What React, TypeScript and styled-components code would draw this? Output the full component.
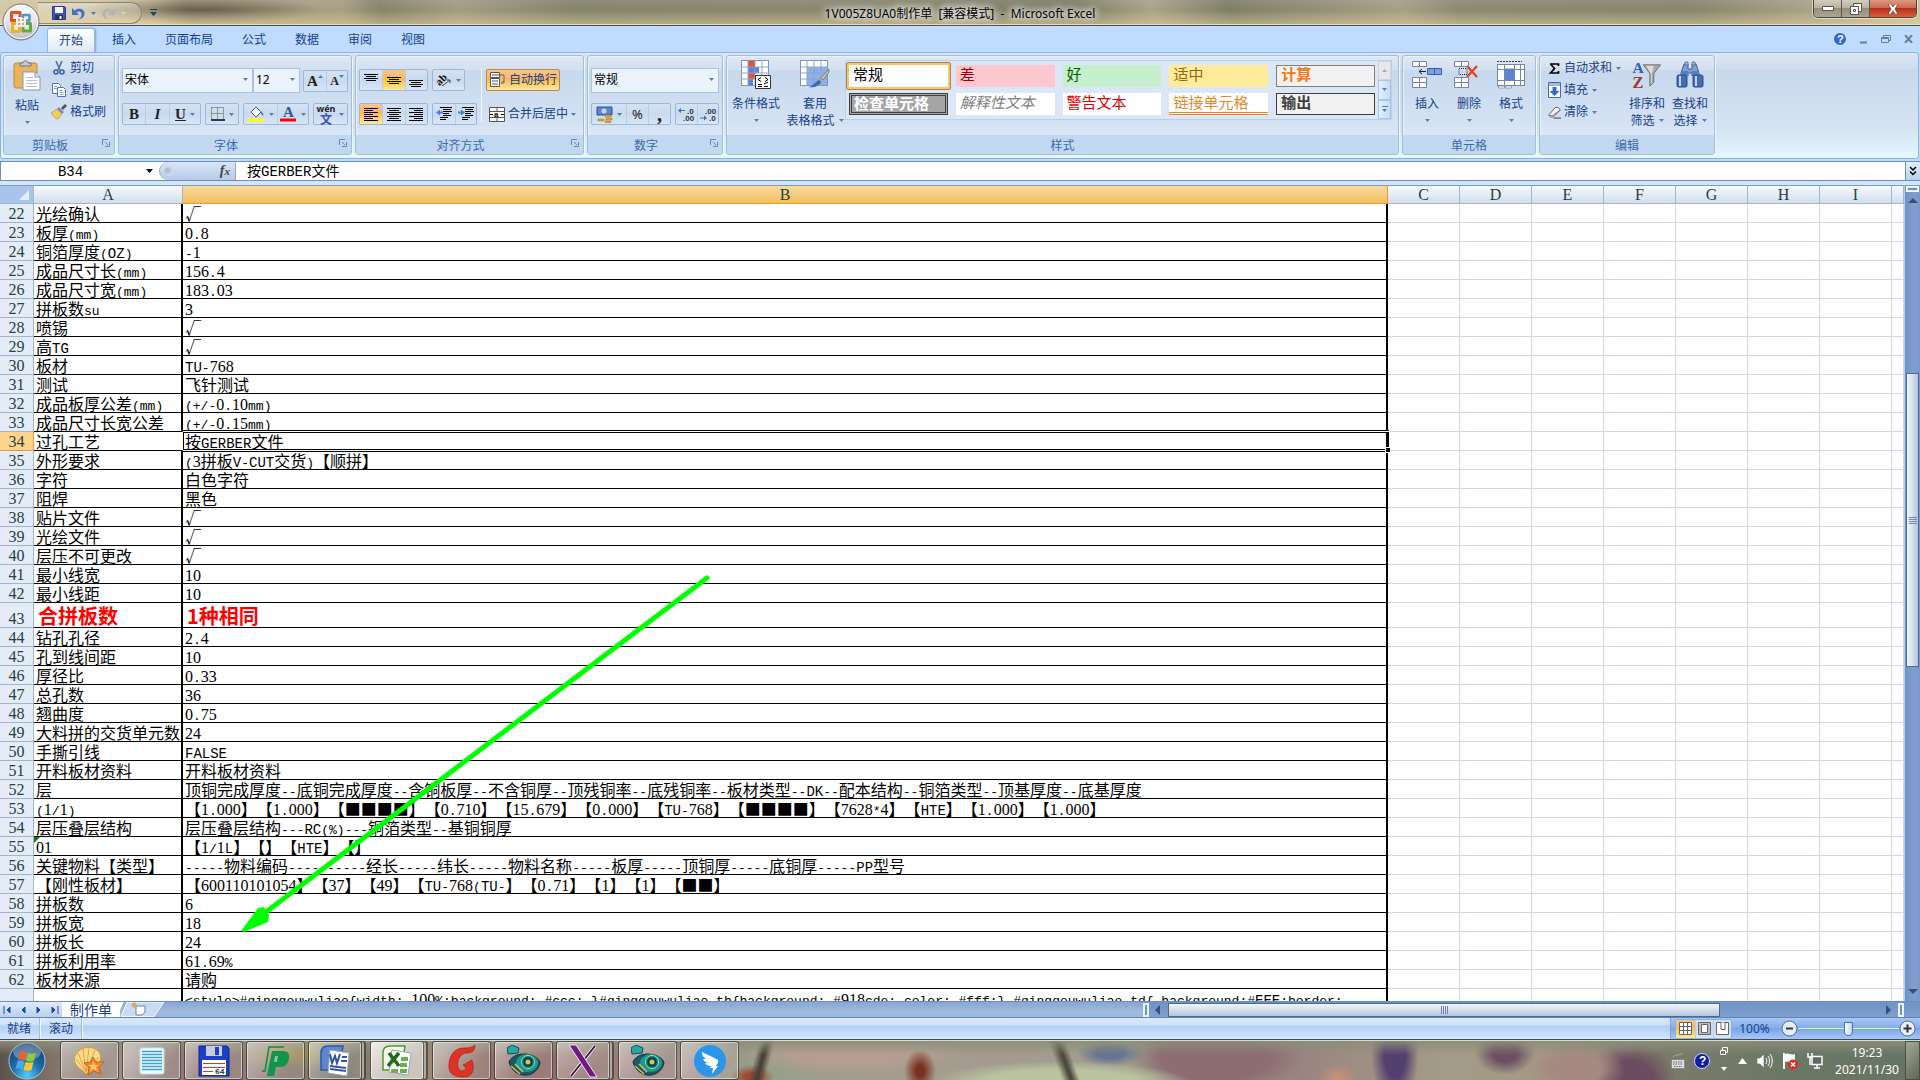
import React from "react";
import styled, { createGlobalStyle, css } from "styled-components";

const UI = `"Noto Sans", "Noto Sans CJK SC", sans-serif`;
const SONG = `"Liberation Mono", "Noto Sans CJK SC", monospace`;

const Global = createGlobalStyle`
  *, *::before, *::after { box-sizing: border-box; }
  html, body { margin: 0; height: 100%; overflow: hidden; }
  body { font: 12px/16px ${UI}; color: #15428b; }
  button, input, select { font: inherit; color: inherit; margin: 0; padding: 0; border: 0; background: none; border-radius: 0; outline: 0; }
  svg { display: block; flex: none; }
`;

/* ---------- shell ---------- */
const Page = styled.div`
  display: flex;
  flex-direction: column;
  height: 100vh;
  position: relative;
  background: #bfdbff;
`;

const TitleBar = styled.header`
  display: grid;
  grid-template-columns: 1fr auto 1fr;
  align-items: start;
  height: 26px;
  flex: none;
  border-bottom: 1px solid #4d4f45;
  box-shadow: inset 0 -1px 0 #e6dfc0;
  background:
    linear-gradient(180deg, rgba(255, 255, 255, 0.08), rgba(255, 255, 255, 0) 40%, rgba(235, 215, 160, 0.5)),
    radial-gradient(ellipse 120px 14px at 200px 10px, rgba(70, 60, 45, 0.65), transparent 100%),
    linear-gradient(75deg, #d3c7a6 0, #cbbf9c 8%, #a39a80 10%, #a79f83 18%, #85836a 20%, #a29c84 24%, #84836c 30%, #8a8770 42%, #7d7d66 56%, #aaa389 60%, #7e7e68 64%, #a69f86 73%, #8b8972 76%, #86856d 88%, #a8a187 94%, #c9bf9f 100%);
`;

const QuickBar = styled.div`
  display: flex;
  align-items: center;
  padding-left: 38px;
`;
const QuickPill = styled.div`
  display: flex;
  align-items: center;
  gap: 6px;
  height: 22px;
  margin-top: 2px;
  width: 104px;
  padding-left: 14px;
  border: 1px solid #8b8877;
  border-left: 0;
  border-radius: 0 11px 11px 0;
  background: linear-gradient(180deg, rgba(255, 255, 255, 0.3), rgba(255, 255, 255, 0.08));
`;
const IconButton = styled.button`
  display: flex;
  align-items: center;
  justify-content: center;
  padding: 0;
`;
const QuickMore = styled(IconButton)`
  margin-left: 7px;
  width: 8px;
`;
const OfficeButton = styled.button`
  position: absolute;
  left: 2px;
  top: 3px;
  width: 38px;
  height: 38px;
  z-index: 3;
`;
const Title = styled.h1`
  margin: 0;
  padding: 0 8px;
  font: 400 12px/28px ${UI};
  color: #000;
  white-space: pre;
  text-shadow: 0 0 6px #fff, 0 0 8px #fff, 0 0 10px rgba(255, 255, 255, 0.8);
`;
const WindowButtons = styled.div`
  justify-self: end;
  display: flex;
  width: 104px;
  height: 18px;
  margin-right: 3px;
  border: 1px solid #4b463c;
  border-top: 0;
  border-radius: 0 0 5px 5px;
  overflow: hidden;
  box-shadow: 0 0 0 1px rgba(255, 255, 255, 0.5);
`;
const WindowButton = styled.button<{ $close?: boolean }>`
  display: flex;
  align-items: center;
  justify-content: center;
  flex: ${(p) => (p.$close ? "0 0 47px" : "1")};
  border-left: ${(p) => (p.$close ? "1px solid #5a2a20" : "0")};
  background: ${(p) =>
    p.$close
      ? "linear-gradient(180deg, #dc9a87 0, #cc6a50 45%, #b8301c 50%, #d8603c 100%)"
      : "linear-gradient(180deg, #d3cdbd 0, #b9b29e 45%, #958e7b 50%, #aca592 100%)"};
  & + & { border-left: 1px solid #5b564a; }
`;

const TabRow = styled.nav`
  display: flex;
  align-items: flex-end;
  gap: 5px;
  height: 26px;
  flex: none;
  padding-left: 47px;
  background: #bfdbff;
`;
const Tab = styled.button<{ $active?: boolean }>`
  height: 24px;
  padding: 0 12px;
  line-height: 22px;
  color: #15428b;
  ${(p) =>
    p.$active &&
    css`
      background: linear-gradient(180deg, #fff, #f3f8fe 40%, #dde8f5);
      border: 1px solid #93b8e6;
      border-bottom: 0;
      border-radius: 3px 3px 0 0;
      padding: 0 11px;
      box-shadow: inset 0 1px 0 #fff, 1px 0 2px #7fa7d8;
    `}
`;
const TabRight = styled.div`
  display: flex;
  align-items: center;
  gap: 13px;
  margin-left: auto;
  height: 26px;
  padding-right: 6px;
`;

const Ribbon = styled.section`
  display: flex;
  gap: 3px;
  flex: none;
  height: 107px;
  margin-right: 1px;
  padding: 2px 3px 3px 2px;
  border: 1px solid #8db2e3;
  border-radius: 3px;
  background: linear-gradient(180deg, #dbe6f4 0, #cfdcec 16px, #c8d8ec 17px, #d5e3f1 75px, #dbf0fa 95px, #e3f8ff 103px);
`;
const GroupBox = styled.section<{ $w: number }>`
  display: flex;
  flex-direction: column;
  width: ${(p) => p.$w}px;
  border: 1px solid #9fbfdd;
  border-radius: 3px;
  box-shadow: 1px 1px 0 #eef6fd, inset 1px 1px 0 #e8f0f9;
  background: linear-gradient(180deg, #dee8f5 0, #d3dff0 14px, #c8d8ed 15px, #d5e3f3 70px, #dae8f6 80px);
`;
const GroupBody = styled.div<{ $pad?: string; $gap?: number }>`
  display: flex;
  align-items: flex-start;
  flex: 1;
  min-height: 0;
  padding: ${(p) => p.$pad || "0 3px"};
  gap: ${(p) => p.$gap || 0}px;
`;
const GroupLabel = styled.footer`
  display: flex;
  align-items: center;
  gap: 6px;
  height: 19px;
  background: #c1d8f0;
  color: #3e6aaa;
  border-radius: 0 0 2px 2px;
  & > span { flex: 1; padding-top: 2px; text-align: center; }
  & > svg { margin: 0 4px 3px 0; }
`;

const Stack = styled.div<{ $gap?: number; $pad?: string }>`
  display: flex;
  flex-direction: column;
  gap: ${(p) => p.$gap || 0}px;
  padding: ${(p) => p.$pad || 0};
`;
const Line = styled.div<{ $gap?: number }>`
  display: flex;
  align-items: center;
  gap: ${(p) => (p.$gap === undefined ? 4 : p.$gap)}px;
`;
const BigButton = styled.button<{ $w: number }>`
  display: flex;
  flex-direction: column;
  align-items: center;
  width: ${(p) => p.$w}px;
  padding-top: 4px;
  line-height: 17px;
  white-space: nowrap;
  & > svg:first-child { margin-bottom: 6px; }
`;
const CaretGap = styled.span`
  display: flex;
  align-items: center;
  height: 17px;
`;
const TextCaret = styled.span`
  display: flex;
  align-items: center;
  gap: 4px;
`;
const SmallButton = styled.button`
  display: flex;
  align-items: center;
  gap: 3px;
  height: 22px;
  white-space: nowrap;
`;
const Segment = styled.div`
  display: flex;
  height: 22px;
  border: 1px solid #9ab8dc;
  border-radius: 2px;
  background: linear-gradient(180deg, #d5e2f2, #c9daee 50%, #d8e6f6);
`;
const hot = css`
  background: linear-gradient(180deg, #f8c58a 0, #fbb75c 45%, #fdc95c 60%, #ffe79a 100%);
`;
const SegButton = styled.button<{ $w: number; $on?: boolean }>`
  display: flex;
  align-items: center;
  justify-content: center;
  gap: 4px;
  width: ${(p) => p.$w}px;
  color: #222;
  & + & { border-left: 1px solid #b8cde6; }
  ${(p) => p.$on && hot}
`;
const Raised = styled.span`
  align-self: flex-start;
  padding-top: 4px;
  margin-left: -4px;
`;
const WrapButton = styled(SmallButton)`
  width: 74px;
  padding-left: 2px;
  border: 1px solid #b58a4f;
  border-radius: 2px;
  ${hot}
`;
const MergeButton = styled(SmallButton)`
  padding-left: 3px;
`;
const VRule = styled.i`
  width: 1px;
  height: 54px;
  margin-top: 12px;
  background: #f0f6fc;
`;
const Combo = styled.label<{ $w: number }>`
  display: flex;
  align-items: center;
  width: ${(p) => p.$w}px;
  height: 25px;
  padding: 0 4px 2px 2px;
  border: 1px solid #abc1de;
  background: #eaf2fb;
  color: #000;
  & select { appearance: none; flex: 1; min-width: 0; height: 21px; color: #000; }
`;

const Gallery = styled.div`
  display: flex;
  width: 547px;
  height: 60px;
  margin-top: 4px;
  border: 1px solid #b9d0ed;
  background: #dbe7f6;
`;
const GalleryGrid = styled.div`
  display: grid;
  grid-template-columns: repeat(5, 1fr);
  grid-auto-rows: 28px;
  column-gap: 2px;
  flex: 1;
  padding-top: 1px;
`;
const StyleFrame = styled.button<{ $sel?: boolean }>`
  display: flex;
  padding: 2px;
  border: 1px solid ${(p) => (p.$sel ? "#a8835a" : "transparent")};
  border-radius: 2px;
  background: ${(p) => (p.$sel ? "#f9c75d" : "none")};
`;
const StyleCell = styled.span<{ $k: string }>`
  flex: 1;
  height: 22px;
  padding-left: 4px;
  text-align: left;
  font: 15px/18px "Noto Sans CJK SC", sans-serif;
  color: #000;
  background: #fff;
  ${(p) =>
    ({
      bad: css`background: #ffc7ce; color: #9c0006;`,
      good: css`background: #c6efce; color: #006100;`,
      mid: css`background: #ffeb9c; color: #9c6500;`,
      calc: css`background: #f2f2f2; color: #e87d1c; font-weight: 700; border: 1px solid #7f7f7f; line-height: 16px;`,
      check: css`background: #a5a5a5; color: #fff; font-weight: 700; border: 3px double #3f3f3f; line-height: 14px; padding-left: 2px;`,
      note: css`color: #7f7f7f; font-style: italic;`,
      warn: css`color: #d00;`,
      link: css`color: #e08a2a; border-bottom: 3px double #ee8322;`,
      out: css`background: #f2f2f2; color: #3f3f3f; font-weight: 700; border: 1px solid #3f3f3f; line-height: 16px;`,
      normal: css``,
    })[p.$k]}
`;
const GalleryScroll = styled.div`
  display: flex;
  flex-direction: column;
  width: 13px;
  & button {
    flex: 1;
    display: flex;
    flex-direction: column;
    gap: 2px;
    align-items: center;
    justify-content: center;
    border: 1px solid #a9c5e8;
    background: linear-gradient(90deg, #e3eefb, #c7dbf3);
  }
  & button:first-child { background: #e8e8e8; border-color: #cdd5de; }
`;
const TinyRule = styled.i`
  width: 6px;
  height: 1px;
  background: #5b7cb0;
`;

/* ---------- formula bar ---------- */
const FormulaBar = styled.div`
  display: flex;
  flex: none;
  height: 20px;
  margin-top: 2px;
  border-top: 1px solid #6c8fc0;
  border-bottom: 1px solid #6c8fc0;
  background: #fff;
  color: #000;
`;
const NameBox = styled.label`
  display: flex;
  align-items: center;
  width: 159px;
  padding-right: 6px;
  border-left: 1px solid #6c8fc0;
  & input { flex: 1; min-width: 0; padding: 2px 6px 0 0; text-align: center; font: 14px/16px ${SONG}; }
`;
const FxPill = styled.div`
  display: flex;
  align-items: center;
  justify-content: space-between;
  width: 77px;
  padding: 0 5px 0 4px;
  border: 1px solid #8fadd3;
  border-width: 0 1px 0 1px;
  border-radius: 10px 0 0 10px;
  background: linear-gradient(180deg, #dbe7f6, #b3c9e8);
`;
const Knob = styled.i`
  width: 9px;
  height: 9px;
  border-radius: 50%;
  background: radial-gradient(circle at 35% 35%, #a6b6cc, #e4ecf6);
`;
const Fx = styled.span`
  font: italic 700 14px/16px "Liberation Serif", serif;
  color: #444;
  & small { font-size: 11px; }
`;
const FormulaInput = styled.input`
  flex: 1;
  min-width: 0;
  padding: 2px 0 0 11px !important;
  font: 14px/16px ${SONG} !important;
`;
const Expand = styled(IconButton)`
  width: 15px;
  background: linear-gradient(180deg, #e6f0fb, #b9d1ee);
  border-left: 1px solid #6c8fc0;
`;
const Gap = styled.div`
  height: 4px;
  flex: none;
  background: #d5e5f8;
`;

/* ---------- sheet ---------- */
const Work = styled.main`
  display: flex;
  flex: 1;
  min-height: 0;
`;
const Sheet = styled.div`
  position: relative;
  flex: 1;
  min-width: 0;
  overflow: hidden;
  background: #fff;
`;
const Grid = styled.table`
  width: 100%;
  table-layout: fixed;
  border-collapse: separate;
  border-spacing: 0;
  color: #000;
  font: 16px/18px "Noto Sans CJK SC", sans-serif;
  text-spacing-trim: space-all;
  & th, & td { padding: 0; font-weight: 400; }
`;
const ColHead = styled.th<{ $on?: boolean; $corner?: boolean }>`
  height: 19px;
  font: 400 16px/17px "Liberation Serif", serif;
  color: #27413e;
  border-top: 1px solid #7a9cc4;
  border-bottom: 1px solid #9eb6ce;
  border-right: 1px solid #9eb6ce;
  background: linear-gradient(180deg, #f6fafb, #e4ecf5 50%, #d5dcea);
  ${(p) => p.$on && css`background: linear-gradient(180deg, #f9d99f, #f1c15f); border-color: #f29536; border-top-color: #7a9cc4;`}
  ${(p) => p.$corner && css`background: #a9c4e9;`}
  & svg { margin-left: auto; margin-right: 4px; }
`;
const RowHead = styled.th<{ $on?: boolean }>`
  height: 19px;
  vertical-align: bottom;
  font: 400 16px/16px "Liberation Serif", serif;
  color: #27413e;
  border-right: 1px solid #9eb6ce;
  border-bottom: 1px solid #9eb6ce;
  background: #e4ecf7;
  ${(p) => p.$on && css`background: #ffd58d; border-color: #f29536;`}
`;
const Cell = styled.td`
  position: relative;
  border-bottom: 1px solid #000;
  border-right: 2px solid #000;
  vertical-align: middle;
`;
const Blank = styled.td`
  border-right: 1px solid #d0d7e5;
  border-bottom: 1px solid #d0d7e5;
`;
const CellText = styled.div<{ $big?: boolean }>`
  height: ${(p) => (p.$big ? 24 : 18)}px;
  overflow: hidden;
  white-space: pre;
  padding-left: 2px;
  ${(p) => p.$big && css`padding-left: 4px; font-size: 20px; line-height: 26px; font-weight: 700; color: #f00;`}
`;
const Digits = styled.span`
  font-family: "Liberation Serif", serif;
`;
const Capitals = styled.span`
  font-family: "Liberation Mono", monospace;
  font-size: 14px;
`;
const Marks = styled(Capitals)`
  font-size: 13px;
`;
const Selection = styled.div`
  position: absolute;
  inset: 0 -3px 0 0;
  border: 1px solid #000;
  box-shadow: 0 -1px 0 #fff, 0 1px 0 #fff, 0 -2px 0 #000, 0 2px 0 #000, -2px 0 0 #fff;
  z-index: 1;
  &::after {
    content: "";
    position: absolute;
    right: -2px;
    bottom: -3px;
    width: 4px;
    height: 4px;
    background: #000;
    box-shadow: 0 0 0 1px #fff;
  }
`;
const ErrorMark = styled.i`
  position: absolute;
  left: 0;
  top: 0;
  border: 3px solid transparent;
  border-top-color: #0a7a1a;
  border-left-color: #0a7a1a;
`;
const Arrow = styled.svg`
  position: absolute;
  left: 0;
  top: 0;
  pointer-events: none;
  z-index: 2;
`;

const VScroll = styled.div`
  display: flex;
  flex-direction: column;
  align-items: stretch;
  width: 16px;
  flex: none;
  padding: 1px;
  border-left: 1px solid #b7cdea;
  background: linear-gradient(90deg, #6f93c4, #7f9fce 60%, #7899c9);
`;
const SplitV = styled.i`
  height: 6px;
  border: 1px solid #fff;
  background: #6f93c4;
  box-shadow: inset 0 0 0 1px #dce9f8;
`;
const VThumb = styled.div`
  display: flex;
  align-items: center;
  justify-content: center;
  height: 294px;
  border: 1px solid #4c6a98;
  background: linear-gradient(90deg, #f2f5fa, #d5dfed 50%, #b2c5de);
`;
const Spacer = styled.div<{ $h?: number; $w?: number }>`
  ${(p) => (p.$h ? `flex: 0 0 ${p.$h}px;` : p.$w ? `flex: 0 0 ${p.$w}px;` : "flex: 1;")}
`;

/* ---------- sheet tabs & status ---------- */
const SheetBar = styled.div`
  display: flex;
  flex: none;
  height: 17px;
  border-top: 1px solid #6c8fc0;
  border-bottom: 1px solid #5f84b8;
  background: linear-gradient(180deg, #86a6d2, #9db9de 60%);
`;
const SheetNav = styled.div`
  display: flex;
  width: 62px;
  background: linear-gradient(180deg, #dfeafa, #b8d0ef);
  & button { flex: 1; display: flex; align-items: center; justify-content: center; }
`;
const SheetTab = styled.button`
  width: 58px;
  text-align: center;
  background: #fff;
  font: 14px/15px "Noto Sans CJK SC", sans-serif;
  color: #1d3f7a;
`;
const HScroll = styled.div`
  display: flex;
  align-items: center;
  flex: 0 1 777px;
  margin-left: auto;
  background: linear-gradient(180deg, #6f93c4, #7f9fce);
`;
const SplitH = styled.i`
  width: 6px;
  height: 14px;
  border: 2px solid #eef5fd;
  background: #6f93c4;
`;
const HThumb = styled.div`
  display: flex;
  align-items: center;
  justify-content: center;
  flex: 0 1 552px;
  height: 14px;
  border: 1px solid #4c6a98;
  background: linear-gradient(180deg, #f2f5fa, #d5dfed 50%, #b2c5de);
`;
const StatusBar = styled.footer`
  display: flex;
  flex: none;
  height: 22px;
  background: linear-gradient(180deg, #dbe9fb 0, #cfe1fa 30%, #b5d0f5 40%, #c9defa 80%, #d6e7fd 100%);
  border-bottom: 1px solid #3a4a5f;
`;
const StatusItem = styled.span`
  padding: 0 8px 0 7px;
  line-height: 21px;
  border-right: 1px solid #9dbde8;
  box-shadow: 1px 0 0 #eef5fe;
  & + & { padding-left: 9px; }
`;
const StatusRight = styled.div`
  display: flex;
  align-items: center;
  margin-left: auto;
  width: 250px;
  padding: 0 4px 0 4px;
  border-left: 1px solid #7da2d4;
  background: linear-gradient(180deg, #a9c8f4 0, #85aeea 45%, #7aa6e6 50%, #a5c7f6 100%);
`;
const ViewSeg = styled(Segment)`
  width: 57px;
  height: 20px;
  border-color: #8fb0dc;
`;
const ZoomText = styled.button`
  width: 45px;
  padding-right: 8px !important;
  text-align: center;
`;
const ZoomRange = styled.input`
  appearance: none;
  flex: 1;
  min-width: 0;
  height: 16px;
  background: linear-gradient(#dfeaf9, #dfeaf9) center / 100% 1px no-repeat !important;
  &::-webkit-slider-thumb {
    appearance: none;
    width: 9px;
    height: 14px;
    border: 1px solid #4f6f9f;
    border-radius: 1px 1px 5px 5px;
    background: linear-gradient(90deg, #fff, #c2d3ea);
  }
`;

/* ---------- taskbar ---------- */
const TaskBar = styled.footer`
  display: flex;
  flex: none;
  height: 40px;
  padding-left: 8px;
  border-top: 1px solid #dcdac9;
  background:
    linear-gradient(180deg, rgba(138, 142, 122, 0.9) 0, rgba(138, 142, 122, 0) 14px),
    linear-gradient(105deg, transparent 733px, #4c4038 740px, #4c4038 742px, transparent 749px),
    radial-gradient(ellipse 22px 12px at 752px 36px, #9a4a30 0 30%, transparent),
    radial-gradient(ellipse 16px 22px at 920px 30px, #7a3220 0 25%, transparent),
    linear-gradient(70deg, transparent 998px, #4f4a40 1006px, #4f4a40 1008px, transparent 1015px),
    radial-gradient(ellipse 130px 22px at 1060px 42px, #b9c3a0 0 60%, transparent),
    radial-gradient(ellipse 24px 60px at 1395px 10px, #54406e 0 45%, transparent),
    radial-gradient(ellipse 20px 16px at 1338px 38px, #cf9272, transparent),
    radial-gradient(ellipse 30px 22px at 1505px 12px, #6b5064 0 40%, transparent),
    radial-gradient(ellipse 50px 28px at 1575px 28px, #a68a82 0 50%, transparent),
    radial-gradient(ellipse 46px 40px at 1630px 40px, #6b4c60 0 50%, transparent),
    radial-gradient(ellipse 110px 26px at 850px 8px, #b49e92 0 60%, transparent),
    radial-gradient(ellipse 34px 14px at 1110px 12px, #667590 0 40%, transparent),
    radial-gradient(ellipse 90px 40px at 1215px 16px, #8d6c72 0 60%, transparent),
    radial-gradient(ellipse 60px 22px at 290px 8px, #9a8a52 0 30%, transparent),
    linear-gradient(90deg, #5c544c 0, #86766c 60px, #a08f88 130px, #8c6f70 200px, #8f7c78 260px, #7a7466 340px, #9a8d7c 420px, #8b6260 520px, #967a74 600px, #a08c86 700px, #96a089 760px, #a69c8e 900px, #a59a90 1000px, #a0a28c 1160px, #9a8480 1300px, #a39b88 1440px, #a49a84 1550px, #7c7a6a 1660px, #6c7866 1780px, #667463 100%);
`;
const StartButton = styled(IconButton)`
  width: 38px;
  margin-right: 14px;
`;
const TaskButton = styled.button<{ $active?: boolean; $stack?: boolean }>`
  display: flex;
  align-items: center;
  justify-content: center;
  width: ${(p) => (p.$stack ? 54 : 59)}px;
  margin-right: ${(p) => (p.$stack ? 8 : 3)}px;
  height: 39px;
  border: 1px solid rgba(50, 45, 40, 0.75);
  border-radius: 3px;
  box-shadow: inset 0 0 0 1px rgba(255, 255, 255, 0.5)${(p) => (p.$stack ? ", 3px 0 0 -1px rgba(235,230,220,.6), 4px 0 0 0 rgba(50,45,40,.6)" : "")};
  background: linear-gradient(135deg, rgba(255, 255, 255, ${(p) => (p.$active ? 0.85 : 0.5)}), rgba(255, 255, 255, ${(p) => (p.$active ? 0.5 : 0.12)}) 70%);
`;
const Tray = styled.div`
  display: flex;
  align-items: center;
  margin-left: auto;
  gap: 9px;
`;
const Clock = styled.time`
  width: 74px;
  text-align: center;
  color: #fff;
  line-height: 17px;
  margin: 0 0 0 -2px;
`;
const ShowDesktop = styled.button`
  align-self: stretch;
  width: 15px;
  margin-left: -8px;
  border: 1px solid #4b4f44 !important;
  background: linear-gradient(135deg, #a3a796, #5f6757) !important;
`;

/* ---------- small drawings ---------- */
const Caret = ({ c = "#5b7cb0", up = false }: { c?: string; up?: boolean }) => (
  <svg width="5" height="3" viewBox="0 0 5 3"><path d={up ? "M0 3h5L2.500 0z" : "M0 0h5L2.500 3z"} fill={c} /></svg>
);
const Launcher = () => (
  <svg width="8" height="8" viewBox="0 0 8 8" fill="none" stroke="#6b88b5"><path d="M.5 6V.5H6M3 3l3 3M7.500 3v4.500H3" /></svg>
);
const Bars = ({ rows, widths, y = 0 }: { rows: number; widths: [number, number][]; y?: number }) => (
  <svg width="15" height="15" viewBox="0 0 15 15" stroke="#000" strokeWidth="1">
    {Array.from({ length: rows }, (_, i) => {
      const [a, b] = widths[i % widths.length];
      return <path key={i} d={`M${a} ${y + i * 2 + 0.5}H${b}`} />;
    })}
  </svg>
);
const Indent = ({ out = false }: { out?: boolean }) => (
  <svg width="17" height="14" viewBox="0 0 17 14">
    <path d="M4 .5h12M8 2.500h7M8 4.500h8M8 6.500h5M8 8.500h7M4 10.500h8M4 12.500h6" stroke="#000" />
    <path d="M7.500 0v14" stroke="#000" strokeDasharray="1 1" />
    <path d={out ? "M0 5.500l4-3v2h3v2H4v2z" : "M7 5.500l-4-3v2H0v2h3v2z"} fill="#4a7fd0" />
  </svg>
);
const Office = () => (
  <svg width="38" height="38" viewBox="0 0 38 38">
    <defs>
      <radialGradient id="ob" cx=".5" cy=".25" r=".8"><stop offset="0" stopColor="#fff" /><stop offset=".55" stopColor="#e4e6ea" /><stop offset="1" stopColor="#a9adb5" /></radialGradient>
    </defs>
    <circle cx="19" cy="19" r="18" fill="url(#ob)" stroke="#77797c" />
    <circle cx="19" cy="19" r="16.500" fill="none" stroke="#fff" />
    <g fill="none" strokeWidth="3" strokeLinejoin="round">
      <path d="M14 17.500H9.500V9.500h8.500V14" stroke="#e2541b" />
      <path d="M21 15v-3h6.500v5.500H24" stroke="#4d95d8" strokeWidth="2.500" />
      <path d="M14 20.500h-3.500v8h7V24" stroke="#f3b21c" />
      <path d="M24 20.500h4.500V28H21v-4" stroke="#65a83a" />
    </g>
    <path d="M16 17h2M20 17h2M16 21h2M20 21h2" stroke="#e08040" strokeWidth="1.500" />
  </svg>
);
const Save = () => (
  <svg width="14" height="14" viewBox="0 0 14 14"><path d="M.5.500h12l1 1v12H.5z" fill="#4453b8" stroke="#2c3788" /><path d="M3 1h8v6H3z" fill="#f4f6fc" /><path d="M3 9h8v5H3z" fill="#23307c" /><path d="M7.500 10h2v3h-2z" fill="#fff" /></svg>
);
const Undo = ({ c = "#3f72cc" }: { c?: string }) => (
  <svg width="13" height="13" viewBox="0 0 13 13"><path d="M0 1v7h7L4.600 5.600C7 3.500 10 5 9.500 8c-.2 2-1.500 3.500-3.500 4.500 4-.3 7-3 6.500-7C12 1.500 6 .5 2.500 3.500z" fill={c} /></svg>
);
const Paste = () => (
  <svg width="28" height="31" viewBox="0 0 28 31">
    <rect x="1" y="3" width="23" height="25" rx="2" fill="#e9b45c" stroke="#b98b3e" />
    <path d="M7 6V3h3c0-3 5-3 5 0h3v3z" fill="#c8ccd2" stroke="#6f757e" />
    <path d="M10 12h12l5 5v13H10z" fill="#fff" stroke="#8b98ad" />
    <path d="M22 12v5h5" fill="#dce4ef" stroke="#8b98ad" />
    <path d="M13 17.500h7M13 20.500h11M13 23.500h11M13 26.500h11" stroke="#b5c2d4" />
  </svg>
);
const Cut = () => (
  <svg width="16" height="16" viewBox="0 0 16 16" fill="none"><path d="M5 1l4 9M11 1L7 10" stroke="#56719f" strokeWidth="1.600" /><circle cx="5" cy="12" r="2" stroke="#3361b0" strokeWidth="1.600" /><circle cx="11" cy="12" r="2" stroke="#3361b0" strokeWidth="1.600" /></svg>
);
const Copy = () => (
  <svg width="16" height="16" viewBox="0 0 16 16" fill="#fff" stroke="#4e74b4"><path d="M1.500 1.500h6l2 2v8h-8z" /><path d="M6.500 5.500h6l2 2v7h-8z" /><path d="M3 4.500h3M3 6.500h3M8.500 8.500h3M8.500 10.500h4M8.500 12.500h4" stroke="#7d9fd6" /></svg>
);
const Brush = () => (
  <svg width="16" height="16" viewBox="0 0 16 16"><path d="M0 9l6-4 5 5-4 5c-2 0-5-3-7-6z" fill="#f0cd62" stroke="#a88a3a" strokeWidth=".6" /><path d="M6 5l2-2 5 5-2 2z" fill="#8d84c7" /><path d="M10 4l4-4 2 2-4 4z" fill="#54545c" /></svg>
);
const GridIcon = ({ kind }: { kind: "cond" | "table" }) => (
  <svg width="30" height="29" viewBox="0 0 30 29">
    <rect x=".5" y=".5" width="27" height="25" fill="#fff" stroke="#7d94b8" />
    {kind === "cond" ? (
      <>
        <path d="M7 1h7v6H7zM7 13h7v6H7z" fill="#e3513d" /><path d="M7 7h11v6H7zM7 19h5v6H7z" fill="#5c83d8" />
      </>
    ) : (
      <path d="M7 7h20v18H7z" fill="#8db0ea" />
    )}
    <path d="M7 .5v25M14 .5v25M21 .5v25M.5 7h27M.5 13h27M.5 19h27" stroke="#8ea4c6" />
    {kind === "cond" ? (
      <>
        <path d="M14.500 15.500h15v13h-15z" fill="#fff" stroke="#333" />
        <path d="M20 17.500l-3 2 3 2M24 17.500l3 2-3 2M17 24.500h4M23 24l4-2M17 26.500h4M23 26.500h4" fill="none" stroke="#000" />
      </>
    ) : (
      <>
        <path d="M29 9l-8 9 2 2 6-8z" fill="#c6c6c6" stroke="#666" strokeWidth=".7" /><path d="M21 18l2 3-2 1-2-2z" fill="#d69b50" /><path d="M19 20l2 2c-2 4-7 6-12 5 4-1 6-5 10-7z" fill="#3c69b4" />
      </>
    )}
  </svg>
);
const CellsIcon = ({ kind }: { kind: "ins" | "del" | "fmt" }) => (
  <svg width="30" height="29" viewBox="0 0 30 29" fill="#fff" stroke="#7486a4">
    {kind === "fmt" ? (
      <>
        <path d="M1 1.500h25" stroke="#333" strokeDasharray="2 1" />
        <rect x="1.500" y="4.500" width="27" height="21" />
        <path d="M8.500 4.500v21M18.500 4.500v21M24.500 4.500v21M1.500 9.500h27M1.500 20.500h27" />
        <path d="M9 9h9v11H9z" fill="#5c83d8" />
        <path d="M2.500 26h6v2h-6zM9.500 26h6v2h-6z" strokeWidth=".7" />
      </>
    ) : (
      <>
        <path d="M.5 1.500h14v5H.5zM7.500 1.500v5M.5 17.500h14v10H.5zM7.500 17.500v10M.5 22.500h14" />
        {kind === "ins" ? (
          <>
            <path d="M15.500 8.500h14v6h-14zM22.500 8.500v6" fill="#7b9ee6" stroke="#3d5fa8" />
            <path d="M7 11.500h7M10 9l-3 2.500 3 2.500" fill="none" stroke="#222" />
          </>
        ) : (
          <>
            <path d="M5 8.500h8v6H5z" fill="none" stroke="#222" strokeDasharray="1 1" />
            <path d="M13 6l10 11M23 6L13 17" stroke="#e0442c" strokeWidth="2.400" />
          </>
        )}
      </>
    )}
  </svg>
);
const SortIcon = () => (
  <svg width="30" height="29" viewBox="0 0 30 30">
    <text x="0" y="13" fontFamily="Liberation Serif" fontWeight="700" fontSize="16" fill="#2f62b8">A</text>
    <text x="0" y="29" fontFamily="Liberation Serif" fontWeight="700" fontSize="17" fill="#a03832">Z</text>
    <path d="M11 5h18l-7 9v9l-4 4V14z" fill="#a8a8a8" stroke="#6e6e6e" /><path d="M14 6h8l-2 8v10l-1 1V14z" fill="#dcdcdc" />
  </svg>
);
const FindIcon = () => (
  <svg width="28" height="29" viewBox="0 -1 28 29">
    <path d="M8 3h4v5h4V3h4l3 9H5z" fill="#7e9fd4" stroke="#405f99" />
    <path d="M9 1h3v3H9zM16 1h3v3h-3z" fill="#a9c0e6" stroke="#405f99" strokeWidth=".7" />
    <path d="M6 10h6l1 5H3zM16 10h6l3 5h-10z" fill="#5a7fc0" />
    <rect x="1" y="14" width="10" height="12" rx="1.500" fill="#456cb2" stroke="#2d4c86" /><rect x="17" y="14" width="10" height="12" rx="1.500" fill="#456cb2" stroke="#2d4c86" />
    <path d="M4 15v10M20 15v10" stroke="#c0d3f2" strokeWidth="2" />
  </svg>
);
const WrapIcon = () => (
  <svg width="17" height="16" viewBox="0 0 17 16" fill="#fff" stroke="#555"><path d="M1.500.500h9v5h-9zM1.500 6.500h9v8h-9z" /><path d="M3 3h9M3 9h6M3 12h6" stroke="#555" /><path d="M12 3h3v6l-3 2M15 9v2h-3" fill="none" stroke="#4a6da8" /></svg>
);
const MergeIcon = () => (
  <svg width="16" height="15" viewBox="0 0 16 15"><path d="M.5.500h15v14H.5zM.5 4.500h15M.5 10.500h15M8 .5v4M8 10.500v4" fill="#fff" stroke="#555" /><text x="5" y="10" fontFamily="Liberation Sans" fontWeight="700" fontSize="8" fill="#000">a</text><path d="M1 7.500h3M12 7.500h3" stroke="#000" /></svg>
);
const Glyph = styled.span<{ $s?: string; $c?: string; $size?: number }>`
  font: ${(p) => p.$s || "700"} ${(p) => p.$size || 15}px/18px "Liberation Serif", serif;
  color: ${(p) => p.$c || "#222"};
`;
const Under = styled(Glyph)`
  text-decoration: underline;
`;
const PctText = styled.span`
  font: 13px/18px "Noto Sans", sans-serif;
`;
const Phonetic = styled.span`
  display: flex;
  flex-direction: column;
  align-items: center;
  font: 700 9px/8px "Noto Sans", sans-serif;
  & b { font: 700 12px/11px "Noto Sans CJK SC", sans-serif; color: #3a55b5; }
`;
const BorderIcon = () => (
  <svg width="14" height="14" viewBox="0 0 14 14"><path d="M.5.500h12v12M.5.500v12M6.500.500v12M.5 6.500h12" fill="none" stroke="#555" strokeDasharray="1 1" /><path d="M0 13h14" stroke="#000" strokeWidth="1.500" /></svg>
);
const FillIcon = () => (
  <svg width="17" height="16" viewBox="0 0 17 16"><path d="M3 6l5-5 5 5-5 5z" fill="#fff" stroke="#556" /><path d="M12 5c3 1 4 3 3 5l-3-4z" fill="#3f70c4" /><path d="M0 12.500h16v3H0z" fill="#ff0" /></svg>
);
const FontColor = () => (
  <svg width="17" height="16" viewBox="0 0 17 16"><text x="3" y="11" fontFamily="Liberation Serif" fontWeight="700" fontSize="15" fill="#33588f">A</text><path d="M0 12.500h16v3H0z" fill="#f00" /></svg>
);
const OrientIcon = () => (
  <svg width="16" height="14" viewBox="0 0 16 14"><text x="1" y="11" transform="rotate(-45 5 9)" fontFamily="Liberation Serif" fontWeight="700" fontSize="11" fill="#111">ab</text><path d="M6 13l8-6M14 7h-3M14 7v3" stroke="#444" fill="none" /></svg>
);
const MoneyIcon = () => (
  <svg width="17" height="17" viewBox="0 0 17 17"><path d="M1 1h15v8H1z" fill="#5d82d6" stroke="#324f95" /><circle cx="8" cy="5" r="2.500" fill="#c9d8f5" /><path d="M9 9h6v2H9zM10 12h6v2h-6zM2 13h6v2H2zM9 15h6v1.500H9z" fill="#e8a62c" stroke="#a5701a" strokeWidth=".5" /></svg>
);
const DecIcon = ({ inc }: { inc?: boolean }) => (
  <svg width="17" height="15" viewBox="0 0 17 15" fontFamily="Liberation Sans" fontWeight="700" fontSize="8" fill="#333">
    <text x={inc ? 9 : 5} y="7">{inc ? ".0" : ".00"}</text><text x={inc ? 5 : 9} y="14">{inc ? ".00" : ".0"}</text>
    <path d={inc ? "M0 3.500l3-2.500v2h4v1H3v2z" : "M7 11l-3-2.500v2H0v1h4v2z"} fill="#3f70c4" />
  </svg>
);
const FillDown = () => (
  <svg width="13" height="16" viewBox="0 0 13 16"><path d="M.5.500h12v15H.5z" fill="#fff" stroke="#456cb2" /><path d="M1 1h11v3H1z" fill="#9db8e2" /><path d="M4.500 5h4v4h3l-5 5-5-5h3z" fill="#3769c8" /></svg>
);
const Sigma = () => (
  <svg width="13" height="13" viewBox="0 0 13 13"><path d="M2 2h8.500v2M2.500 2l4 4.500-4 4.500h8V9" fill="none" stroke="#000" strokeWidth="1.700" /></svg>
);
const Eraser = () => (
  <svg width="13" height="13" viewBox="0 0 14 13"><path d="M1 9l7-8c3 0 5 1 5 3l-7 7c-3 1-5 0-5-2z" fill="#f4f4f8" stroke="#555" /><path d="M1 9c1 1 3 1 5 0l7-5" fill="none" stroke="#777" /><path d="M6 12.500h8" stroke="#333" /></svg>
);
const Grip = ({ v = false }: { v?: boolean }) => (
  <svg width="8" height="8" viewBox="0 0 8 8" stroke="#7188ac"><path d={v ? "M0 1.500h8M0 3.500h8M0 5.500h8M0 7.500h8" : "M1.500 0v8M3.500 0v8M5.500 0v8M7.500 0v8"} /></svg>
);

/* ---------- taskbar icons ---------- */
const Orb = () => (
  <svg width="38" height="38" viewBox="0 0 38 38">
    <defs><radialGradient id="orb" cx=".5" cy=".9" r=".9"><stop offset="0" stopColor="#4fd0f5" /><stop offset=".45" stopColor="#1d6fb0" /><stop offset="1" stopColor="#123a63" /></radialGradient></defs>
    <circle cx="19" cy="19" r="18" fill="url(#orb)" stroke="#a9c6da" />
    <ellipse cx="19" cy="10" rx="14" ry="8" fill="#fff" opacity=".3" />
    <path d="M12 10c2-1 5-1 7 1l-2 8c-2-2-5-2-7-1z" fill="#f0622c" /><path d="M20 11c2 1 5 1 8 0l-2 8c-2 1-5 1-8 0z" fill="#94c83c" />
    <path d="M9.500 19c2-1 5-1 7 1l-2 8c-2-2-5-2-7-1z" fill="#4aa7ea" /><path d="M17.500 20c2 1 5 1 8 0l-2 8c-2 1-5 1-8 0z" fill="#fbc92e" />
  </svg>
);
const Shell = () => (
  <svg width="34" height="32" viewBox="0 0 34 32">
    <path d="M13 29l-4-4C3 22-1 15 3 9 7 2 19 0 25 6c4 4 3 10 0 14l-8 6z" fill="#fad98c" stroke="#d89a3a" />
    <path d="M13 27L3 14M13 27L5 8M13 27L10 4M13 27L16 3M13 27L22 5M13 27L26 12" stroke="#e3a548" fill="none" />
    <path d="M20 12l3 5 8 0-5 5 2 7-7-3-6 4 1-8-5-4 7-1z" fill="#f58a2a" stroke="#c95e12" />
    <path d="M20 16l2 4 4 0-3 2 1 4-4-2-3 2 1-4-3-2h4z" fill="#ffc27a" />
  </svg>
);
const NoteIcon = () => (
  <svg width="26" height="28" viewBox="0 0 26 28"><rect x="1" y="1" width="24" height="26" rx="2" fill="#eef9fe" stroke="#bfe3f4" /><path d="M3 4.500h20M3 7.500h20M3 10.500h20M3 13.500h20M3 16.500h20M3 19.500h20M3 22.500h20" stroke="#3d9fd0" strokeWidth="1.500" /></svg>
);
const Floppy = () => (
  <svg width="32" height="32" viewBox="0 0 32 32"><path d="M1 1h28l2 2v28H1z" fill="#1c3fc8" stroke="#10267e" /><path d="M8 1h16v10H8z" fill="#c9ccd4" /><path d="M17 2h4v8h-4z" fill="#1c3fc8" /><path d="M4 15h24v15H4z" fill="#fff" /><path d="M5 18.500h22M5 22.500h22M5 26.500h10" stroke="#c03a3a" /><text x="17" y="29" fontFamily="Liberation Mono" fontWeight="700" fontSize="8" fill="#333">64</text></svg>
);
const PIcon = () => (
  <svg width="30" height="32" viewBox="0 0 30 32"><path d="M1 26h3L8 2h15" fill="none" stroke="#128a43" strokeWidth="1.500" /><path d="M11 6h11c5 0 7 3 6 8s-4 8-8 8h-5l-2 9H6l4-20z" fill="#12944a" /><path d="M14 11h3l-1 6h-3z" fill="#7fc79c" /></svg>
);
const DocIcon = ({ k }: { k: "W" | "X" }) => {
  const c = k === "W" ? "#2f57a5" : "#4c9a2c";
  return (
    <svg width="32" height="32" viewBox="0 0 32 32">
      <path d="M2 25V8c0-5 3-7 7-7h15l-4 24z" fill={k === "W" ? "#5f86cc" : "#f2faec"} stroke={c} strokeWidth="1.500" />
      {k === "W" ? (
        <>
          <path d="M11 5l19 3-2 23-19-3z" fill="#fff" stroke="#9aa" />
          <path d="M11 9l2 9 3-7 2 7 3-9M23 12h5M22 16h6M11 21l16 2M11 24l16 2" fill="none" stroke={c} strokeWidth="2" />
        </>
      ) : (
        <>
          <path d="M11 5l19 3-3 22-19-3z" fill="#fff" stroke="#9aa" />
          <path d="M8 8l10 13M18 8L7 21" stroke="#226a1c" strokeWidth="3.500" />
          <path d="M20 12h7v4h-7zM19 18h7v4h-7zM10 24h7v4h-7zM19 24h7v4h-7z" fill="#6dae4e" />
        </>
      )}
    </svg>
  );
};
const GIcon = () => (
  <svg width="28" height="34" viewBox="0 0 28 34"><path d="M27 1c0 6-3 8-9 8-6 1-9 7-8 14 1 5 7 5 8 1l-3-3 9-5c3 9 1 17-8 17C4 33 0 28 1 20 2 10 7 5 14 4c5 0 10 0 13-3z" fill="#dd3324" stroke="#a81812" strokeWidth=".6" /></svg>
);
const EyeIcon = () => (
  <svg width="34" height="32" viewBox="0 0 34 32"><path d="M0 3l5-3 7 3-1 5-10 1z" fill="#2aa6a6" stroke="#0c5050" /><path d="M2 17c2-5 8-8 15-8 8 0 15 4 16 9-2 9-10 13-17 12C9 29 4 24 2 17z" fill="#1b5a63" stroke="#0c2f38" /><ellipse cx="20" cy="18" rx="11" ry="9" fill="#1d9a90" /><circle cx="21" cy="17" r="6.500" fill="#0f6d78" stroke="#9ce89a" /><circle cx="21" cy="17" r="3.500" fill="#d7c64a" stroke="#0c3f48" strokeWidth="2" /><path d="M4 21l9 8M8 19l8 8" stroke="#e0b860" strokeWidth="1.500" /></svg>
);
const XIcon = () => (
  <svg width="30" height="34" viewBox="0 0 30 34"><path d="M27 2L3 32" stroke="#fff" strokeWidth="3.500" /><path d="M27 2L3 32" stroke="#3c1048" strokeWidth="2" /><path d="M1 1h7l21 32h-7z" fill="#6f1a80" stroke="#f0e4f2" /></svg>
);
const WingIcon = () => (
  <svg width="32" height="32" viewBox="0 0 32 32"><circle cx="16" cy="16" r="16" fill="#2b95ea" /><path d="M8 7c5 3 12 5 16 8 1 2-1 4-2 6h2l-6 8 1-6h-3l1-2c-3 0-5-1-6-3h3c-3-1-4-2-5-4h3c-3-2-4-4-4-7z" fill="#fff" /></svg>
);

/* ---------- composed pieces ---------- */
function Group({ label, w, launcher, pad, gap, children }: { label: string; w: number; launcher?: boolean; pad?: string; gap?: number; children: React.ReactNode }) {
  return (
    <GroupBox $w={w}>
      <GroupBody $pad={pad} $gap={gap}>{children}</GroupBody>
      <GroupLabel><span>{label}</span>{launcher && <Launcher />}</GroupLabel>
    </GroupBox>
  );
}

function Mixed({ text }: { text: string }) {
  const parts = text.match(/[0-9]+|[A-Z]+|[\x20-\x2f\x3a-\x40\x5b-\x7e]+|[^\x20-\x7e]+/g) || [];
  return (
    <>
      {parts.map((t, i) => {
        if (/^[0-9]/.test(t)) return <Digits key={i}>{t}</Digits>;
        if (/^[A-Z]/.test(t)) return <Capitals key={i}>{t}</Capitals>;
        return /^[\x20-\x7e]/.test(t) ? <Marks key={i}>{t}</Marks> : t;
      })}
    </>
  );
}

const rows: [number, string, string][] = [
  [22, "光绘确认", "√"],
  [23, "板厚(mm)", "0.8"],
  [24, "铜箔厚度(OZ)", "-1"],
  [25, "成品尺寸长(mm)", "156.4"],
  [26, "成品尺寸宽(mm)", "183.03"],
  [27, "拼板数su", "3"],
  [28, "喷锡", "√"],
  [29, "高TG", "√"],
  [30, "板材", "TU-768"],
  [31, "测试", "飞针测试"],
  [32, "成品板厚公差(mm)", "(+/-0.10mm)"],
  [33, "成品尺寸长宽公差", "(+/-0.15mm)"],
  [34, "过孔工艺", "按GERBER文件"],
  [35, "外形要求", "(3拼板V-CUT交货)【顺拼】"],
  [36, "字符", "白色字符"],
  [37, "阻焊", "黑色"],
  [38, "贴片文件", "√"],
  [39, "光绘文件", "√"],
  [40, "层压不可更改", "√"],
  [41, "最小线宽", "10"],
  [42, "最小线距", "10"],
  [43, "合拼板数", "1种相同"],
  [44, "钻孔孔径", "2.4"],
  [45, "孔到线间距", "10"],
  [46, "厚径比", "0.33"],
  [47, "总孔数", "36"],
  [48, "翘曲度", "0.75"],
  [49, "大料拼的交货单元数", "24"],
  [50, "手撕引线", "FALSE"],
  [51, "开料板材资料", "开料板材资料"],
  [52, "层", "顶铜完成厚度--底铜完成厚度--含铜板厚--不含铜厚--顶残铜率--底残铜率--板材类型--DK--配本结构--铜箔类型--顶基厚度--底基厚度"],
  [53, "(1/1)", "【1.000】【1.000】【■■■■】【0.710】【15.679】【0.000】【TU-768】【■■■■】【7628*4】【HTE】【1.000】【1.000】"],
  [54, "层压叠层结构", "层压叠层结构---RC(%)---铜箔类型--基铜铜厚"],
  [55, "01", "【1/1L】【】【HTE】【】"],
  [56, "关键物料【类型】", "-----物料编码----------经长-----纬长-----物料名称-----板厚-----顶铜厚-----底铜厚-----PP型号"],
  [57, "【刚性板材】", "【600110101054】【37】【49】【TU-768(TU-】【0.71】【1】【1】【■■】"],
  [58, "拼板数", "6"],
  [59, "拼板宽", "18"],
  [60, "拼板长", "24"],
  [61, "拼板利用率", "61.69%"],
  [62, "板材来源", "请购"],
  [63, "", "<style>#qinggouwuliao{width: 100%;background: #ccc; }#qinggouwuliao th{background: #918cde; color: #fff;} #qinggouwuliao td{ background:#EEE;border:"],
];
const blanks = ["C", "D", "E", "F", "G", "H", "I", ""];

const styles: [string, string][] = [
  ["常规", "normal"], ["差", "bad"], ["好", "good"], ["适中", "mid"], ["计算", "calc"],
  ["检查单元格", "check"], ["解释性文本", "note"], ["警告文本", "warn"], ["链接单元格", "link"], ["输出", "out"],
];

function RibbonArea() {
  const center: [number, number][] = [[0, 14], [2, 12]];
  return (
    <Ribbon>
      <Group label="剪贴板" w={112} launcher pad="0 0 0 2px" gap={3}>
        <BigButton $w={42}><Paste />粘贴<CaretGap><Caret /></CaretGap></BigButton>
        <Stack $pad="1px 0 0">
          <SmallButton><Cut />剪切</SmallButton>
          <SmallButton><Copy />复制</SmallButton>
          <SmallButton><Brush />格式刷</SmallButton>
        </Stack>
      </Group>

      <Group label="字体" w={234} launcher>
        <Stack $gap={10} $pad="12px 0 0">
          <Line $gap={3}>
            <Line $gap={0}>
              <Combo $w={131}><select aria-label="字体"><option>宋体</option></select><Caret /></Combo>
              <Combo $w={47}><select aria-label="字号"><option>12</option></select><Caret /></Combo>
            </Line>
            <Segment>
              <SegButton $w={22} aria-label="增大字号"><Glyph>A</Glyph><Raised><Caret up /></Raised></SegButton>
              <SegButton $w={21} aria-label="减小字号"><Glyph $size={12}>A</Glyph><Raised><Caret /></Raised></SegButton>
            </Segment>
          </Line>
          <Line>
            <Segment>
              <SegButton $w={22}><Glyph>B</Glyph></SegButton>
              <SegButton $w={24}><Glyph $s="italic 700">I</Glyph></SegButton>
              <SegButton $w={31}><Under>U</Under><Caret /></SegButton>
            </Segment>
            <Segment><SegButton $w={32} aria-label="边框"><BorderIcon /><Caret /></SegButton></Segment>
            <Segment>
              <SegButton $w={33} aria-label="填充颜色"><FillIcon /><Caret /></SegButton>
              <SegButton $w={31} aria-label="字体颜色"><FontColor /><Caret /></SegButton>
            </Segment>
            <Segment><SegButton $w={33}><Phonetic>wén<b>文</b></Phonetic><Caret /></SegButton></Segment>
          </Line>
        </Stack>
      </Group>

      <Group label="对齐方式" w={229} launcher gap={4}>
        <Stack $gap={12} $pad="13px 0 0">
          <Line>
            <Segment>
              <SegButton $w={22} aria-label="顶端对齐"><Bars rows={4} widths={center} y={1} /></SegButton>
              <SegButton $w={23} $on aria-label="垂直居中"><Bars rows={4} widths={center} y={4} /></SegButton>
              <SegButton $w={22} aria-label="底端对齐"><Bars rows={4} widths={center} y={7} /></SegButton>
            </Segment>
            <Segment><SegButton $w={31} aria-label="方向"><OrientIcon /><Caret /></SegButton></Segment>
          </Line>
          <Line>
            <Segment>
              <SegButton $w={22} $on aria-label="左对齐"><Bars rows={7} widths={[[0, 14], [0, 9]]} y={1} /></SegButton>
              <SegButton $w={23} aria-label="居中"><Bars rows={7} widths={center} y={1} /></SegButton>
              <SegButton $w={22} aria-label="右对齐"><Bars rows={7} widths={[[0, 14], [5, 14]]} y={1} /></SegButton>
            </Segment>
            <Segment>
              <SegButton $w={22} aria-label="减少缩进量"><Indent out /></SegButton>
              <SegButton $w={21} aria-label="增加缩进量"><Indent /></SegButton>
            </Segment>
          </Line>
        </Stack>
        <VRule />
        <Stack $gap={12} $pad="13px 0 0">
          <WrapButton><WrapIcon />自动换行</WrapButton>
          <MergeButton><MergeIcon />合并后居中<Caret /></MergeButton>
        </Stack>
      </Group>

      <Group label="数字" w={136} launcher>
        <Stack $gap={10} $pad="12px 0 0">
          <Combo $w={128}><select aria-label="数字格式"><option>常规</option></select><Caret /></Combo>
          <Line>
            <Segment>
              <SegButton $w={34} aria-label="会计数字格式"><MoneyIcon /><Caret /></SegButton>
              <SegButton $w={22}><PctText>%</PctText></SegButton>
              <SegButton $w={22}><Glyph $size={20}>,</Glyph></SegButton>
            </Segment>
            <Segment>
              <SegButton $w={21} aria-label="增加小数位数"><DecIcon inc /></SegButton>
              <SegButton $w={21} aria-label="减少小数位数"><DecIcon /></SegButton>
            </Segment>
          </Line>
        </Stack>
      </Group>

      <Group label="样式" w={673} pad="0">
        <BigButton $w={58}><GridIcon kind="cond" />条件格式<CaretGap><Caret /></CaretGap></BigButton>
        <BigButton $w={60}><GridIcon kind="table" />套用<TextCaret>表格格式<Caret /></TextCaret></BigButton>
        <Gallery>
          <GalleryGrid>
            {styles.map(([t, k], i) => (
              <StyleFrame key={k} $sel={i === 0}><StyleCell $k={k}>{t}</StyleCell></StyleFrame>
            ))}
          </GalleryGrid>
          <GalleryScroll>
            <button aria-label="上一行"><Caret up c="#aaa" /></button>
            <button aria-label="下一行"><Caret /></button>
            <button aria-label="其他"><TinyRule /><Caret /></button>
          </GalleryScroll>
        </Gallery>
      </Group>

      <Group label="单元格" w={134} pad="0 0 0 3px">
        <BigButton $w={42}><CellsIcon kind="ins" />插入<CaretGap><Caret /></CaretGap></BigButton>
        <BigButton $w={42}><CellsIcon kind="del" />删除<CaretGap><Caret /></CaretGap></BigButton>
        <BigButton $w={42}><CellsIcon kind="fmt" />格式<CaretGap><Caret /></CaretGap></BigButton>
      </Group>

      <Group label="编辑" w={176} pad="0 0 0 8px" gap={4}>
        <Stack $pad="1px 0 0">
          <SmallButton><Sigma /><TextCaret>自动求和<Caret /></TextCaret></SmallButton>
          <SmallButton><FillDown /><TextCaret>填充<Caret /></TextCaret></SmallButton>
          <SmallButton><Eraser /><TextCaret>清除<Caret /></TextCaret></SmallButton>
        </Stack>
        <Line $gap={0}>
          <BigButton $w={44}><SortIcon />排序和<TextCaret>筛选<Caret /></TextCaret></BigButton>
          <BigButton $w={42}><FindIcon />查找和<TextCaret>选择<Caret /></TextCaret></BigButton>
        </Line>
      </Group>
    </Ribbon>
  );
}

function SheetArea() {
  return (
    <Work>
      <Sheet>
        <Grid>
          <colgroup>
            <col width="34" /><col width="149" /><col />
            {blanks.map((b, i) => <col key={i} width={b ? 72 : 12} />)}
          </colgroup>
          <thead>
            <tr>
              <ColHead $corner><svg width="10" height="10" viewBox="0 0 10 10"><path d="M10 0v10H0z" fill="#e4edf8" /></svg></ColHead>
              <ColHead>A</ColHead>
              <ColHead $on>B</ColHead>
              {blanks.map((b, i) => <ColHead key={i}>{b}</ColHead>)}
            </tr>
          </thead>
          <tbody>
            {rows.map(([n, a, b]) => (
              <tr key={n}>
                <RowHead $on={n === 34}>{n < 63 ? n : ""}</RowHead>
                <Cell>{n === 55 && <ErrorMark />}<CellText $big={n === 43}><Mixed text={a} /></CellText></Cell>
                <Cell><CellText $big={n === 43}>{n === 43 ? b : <Mixed text={b} />}</CellText>{n === 34 && <Selection />}</Cell>
                {blanks.map((_, i) => <Blank key={i} />)}
              </tr>
            ))}
          </tbody>
        </Grid>
        <Arrow width="720" height="760" viewBox="0 185 720 760">
          <path d="M707 578L262 915" stroke="#0f0" strokeWidth="5" strokeLinecap="round" />
          <path d="M241 931l17-23 6-1 5 8-1 7-24 10z" fill="#0f0" />
        </Arrow>
      </Sheet>
      <VScroll>
        <SplitV />
        <Spacer $h={6} />
        <IconButton aria-label="向上滚动"><svg width="10" height="5" viewBox="0 0 10 5"><path d="M0 5h10L5 0z" fill="#33507f" /></svg></IconButton>
        <Spacer $h={170} />
        <VThumb><Grip v /></VThumb>
        <Spacer />
        <IconButton aria-label="向下滚动"><svg width="10" height="5" viewBox="0 0 10 5"><path d="M0 0h10L5 5z" fill="#33507f" /></svg></IconButton>
        <Spacer $h={6} />
      </VScroll>
    </Work>
  );
}

const navIcons: [string, string][] = [
  ["第一张", "M1 0v8M7 1v6L4 4z"],
  ["上一张", "M6 1v6L3 4z"],
  ["下一张", "M3 1v6l3-3z"],
  ["最后一张", "M8 0v8M2 1v6l3-3z"],
];

const tasks: [string, React.ReactNode, boolean?, boolean?][] = [
  ["贝壳", <Shell />], ["记事本", <NoteIcon />], ["磁盘", <Floppy />], ["项目", <PIcon />],
  ["Word", <DocIcon k="W" />, true], ["Excel", <DocIcon k="X" />, true, true], ["G", <GIcon />],
  ["查看器", <EyeIcon />], ["X", <XIcon />, true], ["查看器 2", <EyeIcon />], ["钉钉", <WingIcon />],
];

export default function App() {
  return (
    <Page>
      <Global />
      <OfficeButton aria-label="Office 按钮"><Office /></OfficeButton>
      <TitleBar>
        <QuickBar>
          <QuickPill>
            <IconButton aria-label="保存"><Save /></IconButton>
            <IconButton aria-label="撤消"><Undo /></IconButton>
            <Caret />
            <IconButton aria-label="恢复"><svg width="13" height="13" viewBox="0 0 13 13"><path d="M13 1v7H6l2.400-2.400C6 3.500 3 5 3.500 8c.2 2 1.500 3.500 3.500 4.500-4-.3-7-3-6.500-7C1 1.500 7 .5 10.500 3.500z" fill="#b0b4b8" /></svg></IconButton>
            <Caret c="#d8d4c8" />
          </QuickPill>
          <QuickMore aria-label="自定义快速访问工具栏"><svg width="7" height="7" viewBox="0 0 7 7"><path d="M0 .5h7" stroke="#1f3f6f" /><path d="M0 3h7L3.500 7z" fill="#1f3f6f" /></svg></QuickMore>
        </QuickBar>
        <Title>{"1V005Z8UA0制作单  [兼容模式]  -  Microsoft Excel"}</Title>
        <WindowButtons>
          <WindowButton aria-label="最小化"><svg width="12" height="5" viewBox="0 0 12 5"><path d="M.5.500h11v4H.5z" fill="#fff" stroke="#555" /></svg></WindowButton>
          <WindowButton aria-label="还原"><svg width="12" height="12" viewBox="0 0 12 12" fill="#fff" stroke="#555"><path d="M3.500.500h8v8h-8z" /><path d="M.5 3.500h8v8h-8z" /><path d="M3.500 6.500h2v2h-2z" /></svg></WindowButton>
          <WindowButton $close aria-label="关闭"><svg width="12" height="10" viewBox="0 0 12 10"><path d="M1 0h3l2 3 2-3h3L8 5l3 5H8L6 7l-2 3H1l3-5z" fill="#fff" stroke="#5b3a35" strokeWidth=".7" /></svg></WindowButton>
        </WindowButtons>
      </TitleBar>

      <TabRow>
        {["开始", "插入", "页面布局", "公式", "数据", "审阅", "视图"].map((t, i) => <Tab key={t} $active={i === 0}>{t}</Tab>)}
        <TabRight>
          <IconButton aria-label="帮助"><svg width="14" height="14" viewBox="0 0 14 14"><circle cx="7" cy="7" r="6.500" fill="#2f68d0" stroke="#dbe9fb" /><text x="4" y="11" fontFamily="Liberation Sans" fontWeight="700" fontSize="11" fill="#fff">?</text></svg></IconButton>
          <IconButton aria-label="最小化窗口"><svg width="8" height="9" viewBox="0 0 8 9"><path d="M0 7.500h7" stroke="#6b7c96" strokeWidth="2" /></svg></IconButton>
          <IconButton aria-label="还原窗口"><svg width="10" height="8" viewBox="0 0 10 8" fill="none" stroke="#6b7c96"><path d="M2.500 2V.5h7v5H8M.5 2.500h7v5h-7zM.5 3.500h7" /></svg></IconButton>
          <IconButton aria-label="关闭窗口"><svg width="10" height="8" viewBox="0 0 10 8"><path d="M1 0l7 8M8 0L1 8" stroke="#6b7c96" strokeWidth="2" /></svg></IconButton>
        </TabRight>
      </TabRow>

      <RibbonArea />

      <FormulaBar>
        <NameBox>
          <input aria-label="名称框" defaultValue="B34" />
          <svg width="7" height="4" viewBox="0 0 7 4"><path d="M0 0h7L3.500 4z" fill="#000" /></svg>
        </NameBox>
        <FxPill><Knob /><Fx>f<small>x</small></Fx></FxPill>
        <FormulaInput aria-label="编辑栏" defaultValue="按GERBER文件" />
        <Expand aria-label="展开编辑栏"><svg width="8" height="10" viewBox="0 0 8 10" fill="none" stroke="#000" strokeWidth="1.500"><path d="M1 1l3 3 3-3M1 5.500l3 3 3-3" /></svg></Expand>
      </FormulaBar>
      <Gap />

      <SheetArea />

      <SheetBar>
        <SheetNav>
          {navIcons.map(([l, d]) => (
            <button key={l} aria-label={l}><svg width="9" height="8" viewBox="0 0 9 8"><path d={d} fill="#1c4b9c" stroke="#1c4b9c" strokeWidth="1" /></svg></button>
          ))}
        </SheetNav>
        <SheetTab>制作单</SheetTab>
        <IconButton aria-label="插入工作表">
          <svg width="45" height="15" viewBox="0 0 45 15">
            <path d="M0 0h4L0 8z" fill="#fff" /><path d="M7 0h37L34 14.500H1z" fill="#c9dbf3" stroke="#f4f8fd" />
            <path d="M16 4h9v6l-3 3h-6z" fill="#fff" stroke="#6680a8" /><path d="M14 0v6M11 3h6M12 1l4 4M16 1l-4 4" stroke="#f0962e" />
          </svg>
        </IconButton>
        <HScroll>
          <SplitH />
          <Spacer $w={6} />
          <IconButton aria-label="向左滚动"><svg width="5" height="10" viewBox="0 0 5 10"><path d="M5 0v10L0 5z" fill="#33507f" /></svg></IconButton>
          <Spacer $w={8} />
          <HThumb><Grip /></HThumb>
          <Spacer />
          <IconButton aria-label="向右滚动"><svg width="5" height="10" viewBox="0 0 5 10"><path d="M0 0v10l5-5z" fill="#33507f" /></svg></IconButton>
          <Spacer $w={7} />
          <SplitH />
          <Spacer $w={16} />
        </HScroll>
      </SheetBar>

      <StatusBar>
        <StatusItem>就绪</StatusItem>
        <StatusItem>滚动</StatusItem>
        <StatusRight>
          <ViewSeg>
            <SegButton $w={19} $on aria-label="普通"><svg width="13" height="13" viewBox="0 0 13 13" fill="#fff" stroke="#666"><path d="M.5.500h12v12H.5zM4.500.500v12M8.500.500v12M.5 4.500h12M.5 8.500h12" /></svg></SegButton>
            <SegButton $w={18} aria-label="页面布局视图"><svg width="13" height="13" viewBox="0 0 13 13" fill="#fff" stroke="#666"><path d="M.5.500h12v12H.5z" fill="#bbb" /><path d="M3.500 2.500h6v8h-6z" /></svg></SegButton>
            <SegButton $w={18} aria-label="分页预览"><svg width="13" height="13" viewBox="0 0 13 13" fill="#fff" stroke="#666"><path d="M.5.500h12v12H.5z" /><path d="M5 .5v7h4v-7" /></svg></SegButton>
          </ViewSeg>
          <Spacer $w={4} />
          <ZoomText>100%</ZoomText>
          <IconButton aria-label="缩小"><svg width="17" height="17" viewBox="0 0 17 17"><circle cx="8.500" cy="8.500" r="7.500" fill="#e6eef9" stroke="#456aa5" /><path d="M5 8.500h7" stroke="#333" strokeWidth="2" /></svg></IconButton>
          <ZoomRange type="range" min="0" max="100" defaultValue="50" aria-label="缩放" />
          <IconButton aria-label="放大"><svg width="17" height="17" viewBox="0 0 17 17"><circle cx="8.500" cy="8.500" r="7.500" fill="#e6eef9" stroke="#456aa5" /><path d="M4.500 8.500h8M8.500 4.500v8" stroke="#333" strokeWidth="2" /></svg></IconButton>
        </StatusRight>
      </StatusBar>

      <TaskBar>
        <StartButton aria-label="开始菜单"><Orb /></StartButton>
        {tasks.map(([l, icon, stack, active]) => (
          <TaskButton key={l} aria-label={l} $stack={stack} $active={active}>{icon}</TaskButton>
        ))}
        <Tray>
          <svg width="14" height="18" viewBox="0 0 14 18"><path d="M2 5c0-3 8-1 10-4" fill="none" stroke="#aaa" /><path d="M.5 7.500h13v9H.5z" fill="#ddd" stroke="#888" /><path d="M2 10h10M2 12h10M3 14.500h8" stroke="#666" strokeDasharray="1.500 1" /></svg>
          <svg width="16" height="16" viewBox="0 0 16 16"><circle cx="8" cy="8" r="7.500" fill="#0d1f9c" stroke="#cdd4f4" /><text x="5" y="12" fontFamily="Liberation Sans" fontWeight="700" fontSize="12" fill="#fff">?</text></svg>
          <svg width="10" height="30" viewBox="0 0 10 30" fill="none" stroke="#fff"><path d="M3.500 4V1.500h5v5H6M1.500 4.500h5v4h-5z" /><path d="M2 21h6l-3 4z" fill="#fff" stroke="none" /></svg>
          <svg width="9" height="6" viewBox="0 0 9 6"><path d="M0 6h9L4.500 0z" fill="#fff" /></svg>
          <svg width="17" height="18" viewBox="0 0 17 18" fill="none" stroke="#fff"><path d="M1 6h3l4-4v14l-4-4H1z" fill="#fff" stroke="#666" strokeWidth=".6" /><path d="M10 6c1 2 1 4 0 6M12 4c2 3 2 7 0 10M14 2c3 4 3 10 0 14" /></svg>
          <svg width="16" height="18" viewBox="0 0 16 18"><path d="M2 1v16" stroke="#fff" strokeWidth="2" /><path d="M3 2c4-2 6 2 10 0v8c-4 2-6-2-10 0z" fill="#fff" /><circle cx="11" cy="12.500" r="5" fill="#dc2f22" /><path d="M9 10.500l4 4M13 10.500l-4 4" stroke="#fff" strokeWidth="1.500" /></svg>
          <svg width="16" height="18" viewBox="0 0 16 18" fill="none" stroke="#fff" strokeWidth="1.500"><path d="M5 4.500h10v8H5zM7 16h6M10 13v3" fill="#5a6a66" /><path d="M1 1v4h4V1M3 5v8" /></svg>
          <Clock>19:23<br />2021/11/30</Clock>
          <ShowDesktop aria-label="显示桌面" />
        </Tray>
      </TaskBar>
    </Page>
  );
}
